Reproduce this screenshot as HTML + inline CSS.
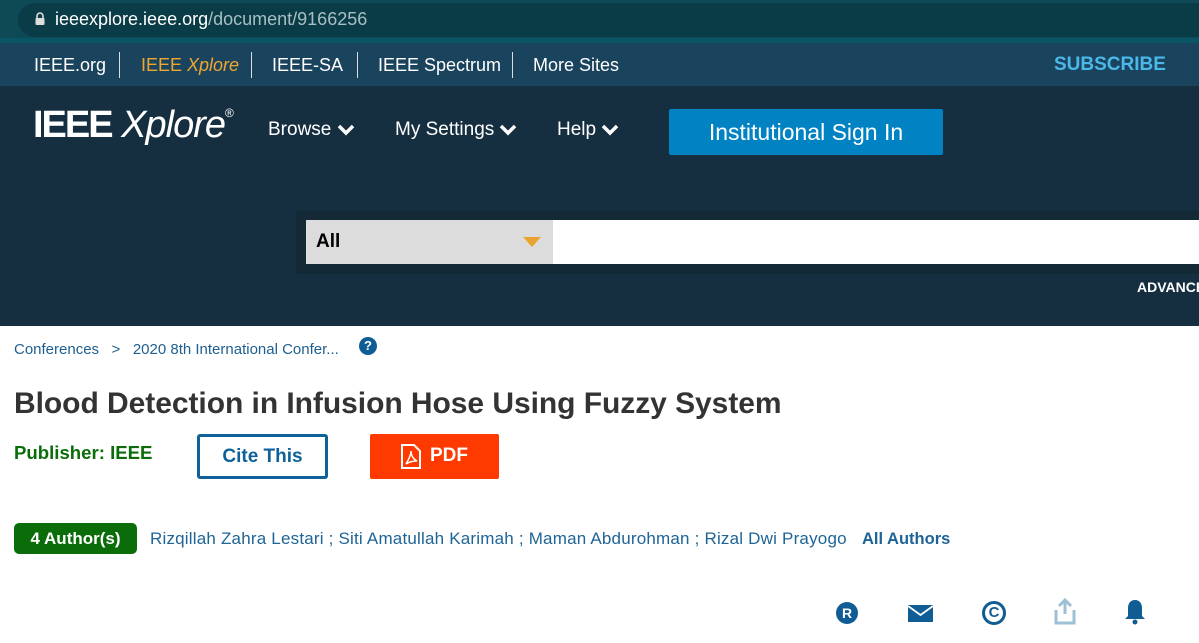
<!DOCTYPE html>
<html><head><meta charset="utf-8"><style>
*{margin:0;padding:0;box-sizing:border-box}
body{width:1199px;height:643px;overflow:hidden;font-family:"Liberation Sans",Arial,sans-serif;background:#fff;position:relative}
.a{position:absolute;white-space:nowrap}
</style></head><body>
<div class="a" style="left:0;top:0;width:1199px;height:38px;background:#0d4a56"></div>
<div class="a" style="left:18px;top:3px;width:1200px;height:34px;background:#0a3c47;border-radius:17px"></div>
<svg class="a" style="left:34px;top:12px" width="12" height="14" viewBox="0 0 12 14"><path d="M3 6V4a3 3 0 0 1 6 0v2" stroke="#ddd" stroke-width="1.6" fill="none"/><rect x="1.5" y="6" width="9" height="7" rx="1" fill="#ddd"/></svg>
<div class="a" style="left:55px;top:9px;font-size:18px;color:#fff">ieeexplore.ieee.org<span style="color:#a8bfc4">/document/9166256</span></div>
<div class="a" style="left:0;top:38px;width:1199px;height:5px;background:#0a5565"></div>
<div class="a" style="left:0;top:43px;width:1199px;height:43px;background:#1a445d"></div>
<div class="a" style="left:34px;top:55px;font-size:18px;color:#fff">IEEE.org</div>
<div class="a" style="left:119px;top:52px;width:1px;height:26px;background:#ddd"></div>
<div class="a" style="left:141px;top:55px;font-size:18px;color:#f0a52f">IEEE <i>Xplore</i></div>
<div class="a" style="left:251px;top:52px;width:1px;height:26px;background:#ddd"></div>
<div class="a" style="left:272px;top:55px;font-size:18px;color:#fff">IEEE-SA</div>
<div class="a" style="left:357px;top:52px;width:1px;height:26px;background:#ddd"></div>
<div class="a" style="left:378px;top:55px;font-size:18px;color:#fff">IEEE Spectrum</div>
<div class="a" style="left:512px;top:52px;width:1px;height:26px;background:#ddd"></div>
<div class="a" style="left:533px;top:55px;font-size:18px;color:#fff">More Sites</div>
<div class="a" style="left:1054px;top:54px;font-size:19px;font-weight:bold;color:#4cb8ea">SUBSCRIBE</div>
<div class="a" style="left:0;top:86px;width:1199px;height:240px;background:#162f40"></div>
<div class="a" style="left:33px;top:104px;font-size:38px;color:#fff;letter-spacing:-1px"><b style="letter-spacing:-2px">IEEE</b> <i style="font-weight:normal">Xplore</i><sup style="font-size:12px;vertical-align:20px">®</sup></div>
<div class="a" style="left:268px;top:119px;font-size:19px;color:#fff">Browse</div>
<div class="a" style="left:395px;top:119px;font-size:19px;color:#fff">My Settings</div>
<div class="a" style="left:557px;top:119px;font-size:19px;color:#fff">Help</div>
<svg class="a" style="left:337px;top:123px" width="18" height="13"><path d="M2 3l7 7 7-7" stroke="#fff" stroke-width="3.5" fill="none"/></svg>
<svg class="a" style="left:499px;top:123px" width="18" height="13"><path d="M2 3l7 7 7-7" stroke="#fff" stroke-width="3.5" fill="none"/></svg>
<svg class="a" style="left:601px;top:123px" width="18" height="13"><path d="M2 3l7 7 7-7" stroke="#fff" stroke-width="3.5" fill="none"/></svg>
<div class="a" style="left:669px;top:109px;width:274px;height:46px;background:#0082c3;border-radius:2px;color:#fff;font-size:23px;text-align:center;line-height:46px">Institutional Sign In</div>
<div class="a" style="left:296px;top:211px;width:903px;height:63px;background:#132935"></div>
<div class="a" style="left:306px;top:220px;width:247px;height:44px;background:#dcdcdc"></div>
<div class="a" style="left:316px;top:231px;font-size:19px;font-weight:bold;color:#000">All</div>
<svg class="a" style="left:523px;top:237px" width="18" height="11"><path d="M0 0h18L9 10z" fill="#e8a22e"/></svg>
<div class="a" style="left:553px;top:220px;width:646px;height:44px;background:#fff"></div>
<div class="a" style="left:1137px;top:279px;font-size:14px;font-weight:bold;color:#fff">ADVANCED</div>
<div class="a" style="left:14px;top:341px;font-size:15px;color:#1e5f8f">Conferences&nbsp;&nbsp;&nbsp;&gt;&nbsp;&nbsp;&nbsp;2020 8th International Confer...</div>
<div class="a" style="left:359px;top:337px;width:18px;height:18px;border-radius:50%;background:#0f5d94;color:#fff;font-size:13px;font-weight:bold;text-align:center;line-height:18px">?</div>
<div class="a" style="left:14px;top:387px;font-size:30px;font-weight:bold;color:#333;letter-spacing:-0.05px">Blood Detection in Infusion Hose Using Fuzzy System</div>
<div class="a" style="left:14px;top:442px;font-size:18.6px;font-weight:bold;color:#0a6d0a">Publisher: IEEE</div>
<div class="a" style="left:197px;top:434px;width:131px;height:45px;border:3px solid #0f6299;border-radius:3px;color:#0f6299;font-size:19px;font-weight:bold;text-align:center;line-height:39px">Cite This</div>
<div class="a" style="left:370px;top:434px;width:129px;height:45px;background:#ff3a00;border-radius:2px"></div>
<svg class="a" style="left:400px;top:444px" width="22" height="25" viewBox="0 0 22 25"><path d="M2 1h12l6 6v17H2z" stroke="#fff" stroke-width="2" fill="none"/><path d="M6 20c3-5 5-9 5-13 0 4 2 8 6 10-4 0-8 1-11 3z" stroke="#fff" stroke-width="1.5" fill="none"/></svg>
<div class="a" style="left:430px;top:445px;font-size:19px;font-weight:bold;color:#fff">PDF</div>
<div class="a" style="left:14px;top:523px;width:123px;height:31px;background:#0a6d0a;border-radius:5px;color:#fff;font-size:17px;font-weight:bold;text-align:center;line-height:31px">4 Author(s)</div>
<div class="a" style="left:150px;top:529px;font-size:17px;color:#1e6496;letter-spacing:0.2px">Rizqillah Zahra Lestari ; Siti Amatullah Karimah ; Maman Abdurohman ; Rizal Dwi Prayogo</div>
<div class="a" style="left:862px;top:530px;font-size:16.5px;font-weight:bold;color:#1e6496">All Authors</div>
<div class="a" style="left:836px;top:602px;width:22px;height:22px;border-radius:50%;background:#0f5d94;color:#fff;font-size:14px;font-weight:bold;text-align:center;line-height:22px">R</div>
<svg class="a" style="left:908px;top:605px" width="25" height="17"><rect width="25" height="17" fill="#0f5d94"/><path d="M0 1l12.5 9L25 1" stroke="#fff" stroke-width="1.8" fill="none"/></svg>
<div class="a" style="left:982px;top:601px;width:24px;height:24px;border-radius:50%;border:3px solid #0f5d94;color:#0f5d94;font-size:15px;font-weight:bold;text-align:center;line-height:18px">C</div>
<svg class="a" style="left:1054px;top:598px" width="22" height="27"><path d="M11 2v14M5 8l6-6 6 6" stroke="#9ec0d6" stroke-width="3" fill="none"/><path d="M2 12v13h18V12" stroke="#9ec0d6" stroke-width="3" fill="none"/></svg>
<svg class="a" style="left:1124px;top:598px" width="22" height="28"><path d="M11 2c-5 0-7 4-7 8v8l-3 3h20l-3-3v-8c0-4-2-8-7-8z" fill="#0f5d94"/><circle cx="11" cy="24" r="2.5" fill="#0f5d94"/></svg>
</body></html>
